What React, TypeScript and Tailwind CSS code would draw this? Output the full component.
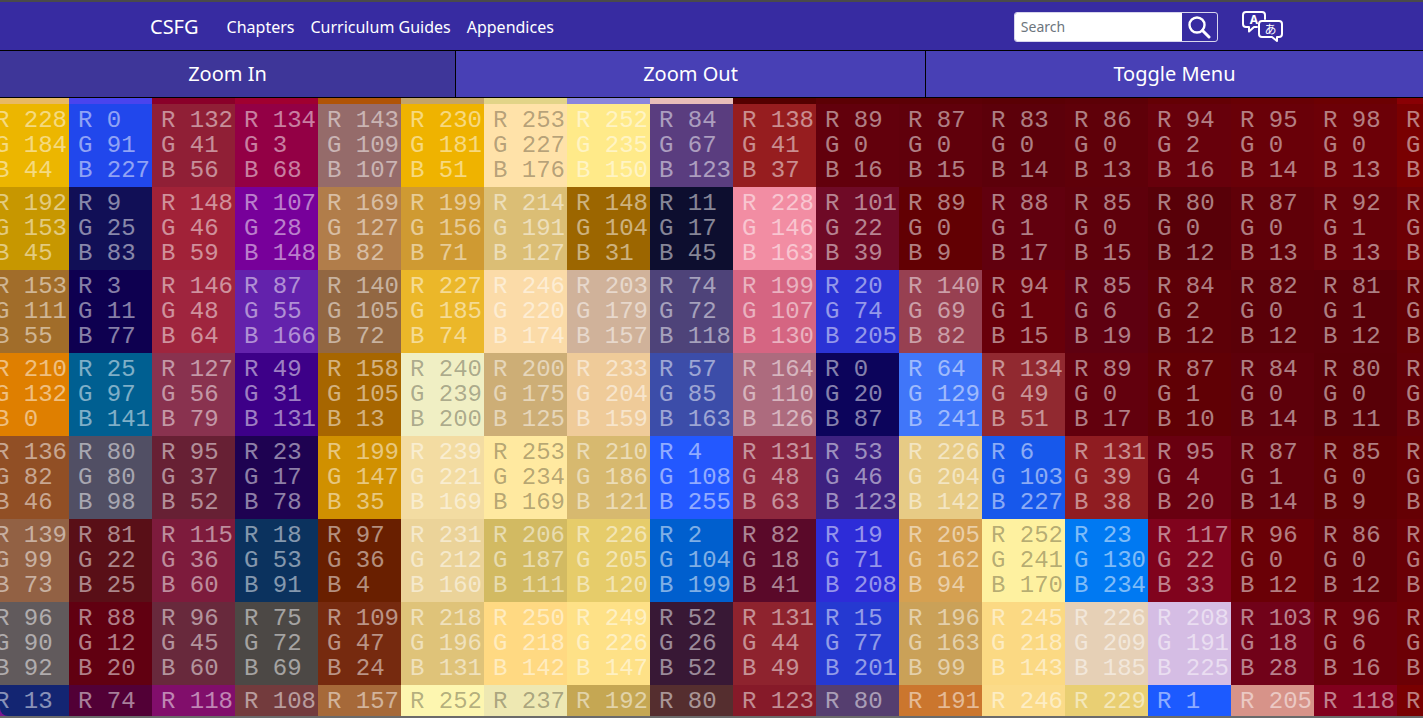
import React from "react";

type Rgb = [number, number, number];

// rows of the pixel grid as labelled on the page
const rows: Rgb[][] = [
  [[228,184,44],[0,91,227],[132,41,56],[134,3,68],[143,109,107],[230,181,51],[253,227,176],[252,235,150],[84,67,123],[138,41,37],[89,0,16],[87,0,15],[83,0,14],[86,0,13],[94,2,16],[95,0,14],[98,0,13],[110,0,10]],
  [[192,153,45],[9,25,83],[148,46,59],[107,28,148],[169,127,82],[199,156,71],[214,191,127],[148,104,31],[11,17,45],[228,146,163],[101,22,39],[89,0,9],[88,1,17],[85,0,15],[80,0,12],[87,0,13],[92,1,13],[100,0,12]],
  [[153,111,55],[3,11,77],[146,48,64],[87,55,166],[140,105,72],[227,185,74],[246,220,174],[203,179,157],[74,72,118],[199,107,130],[20,74,205],[140,69,82],[94,1,15],[85,6,19],[84,2,12],[82,0,12],[81,1,12],[90,0,10]],
  [[210,132,0],[25,97,141],[127,56,79],[49,31,131],[158,105,13],[240,239,200],[200,175,125],[233,204,159],[57,85,163],[164,110,126],[0,20,87],[64,129,241],[134,49,51],[89,0,17],[87,1,10],[84,0,14],[80,0,11],[90,0,12]],
  [[136,82,46],[80,80,98],[95,37,52],[23,17,78],[199,147,35],[239,221,169],[253,234,169],[210,186,121],[4,108,255],[131,48,63],[53,46,123],[226,204,142],[6,103,227],[131,39,38],[95,4,20],[87,1,14],[85,0,9],[92,0,10]],
  [[139,99,73],[81,22,25],[115,36,60],[18,53,91],[97,36,4],[231,212,160],[206,187,111],[226,205,120],[2,104,199],[82,18,41],[19,71,208],[205,162,94],[252,241,170],[23,130,234],[117,22,33],[96,0,12],[86,0,12],[96,0,12]],
  [[96,90,92],[88,12,20],[96,45,60],[75,72,69],[109,47,24],[218,196,131],[250,218,142],[249,226,147],[52,26,52],[131,44,49],[15,77,201],[196,163,99],[245,218,143],[226,209,185],[208,191,225],[103,18,28],[96,6,16],[98,0,12]],
  [[13,45,110],[74,4,52],[118,28,104],[108,62,62],[157,108,66],[252,246,184],[237,232,184],[192,168,96],[80,48,48],[123,36,44],[80,66,108],[191,122,62],[246,220,148],[229,208,128],[1,108,247],[205,150,140],[118,8,32],[110,0,10]],
];

// strip of the row above, only its last 6px show
const strip: string[] = [
  "#e8b964","#4a44ee","#8a0029","#a00030","#b05406","#c4a469","#e2d488","#8a85dc","#e8bdb8",
  "#540000","#5c0004","#5c0005","#5a0004","#5c0006","#640004","#680004","#6c0002","#8a0004",
];

const toLinear = (v: number) => {
  const c = v / 255;
  return c <= 0.04045 ? c / 12.92 : Math.pow((c + 0.055) / 1.055, 2.4);
};

const toByte = (v: number) => {
  const c = Math.min(1, Math.max(0, v));
  return Math.round(255 * (c <= 0.0031308 ? c * 12.92 : 1.055 * Math.pow(c, 1 / 2.4) - 0.055));
};

// the capture shows the labelled values more saturated than plain sRGB,
// and strong blues lean towards violet
const shown = ([r, g, b]: Rgb) => {
  const [lr, lg, lb] = [toLinear(r), toLinear(g), toLinear(b)];
  const blue = Math.max(0, lb - Math.max(lr, lg));
  const nr = 1.2249 * lr - 0.2247 * lg + 0.058 * blue;
  const ng = -0.042 * lr + 1.0419 * lg - 0.07 * blue;
  const nb = -0.0197 * lr - 0.0786 * lg + 1.0979 * lb;
  return `rgb(${toByte(nr)},${toByte(ng)},${toByte(nb)})`;
};

const Cell: React.FC<{ value: Rgb }> = ({ value }) => {
  const isLight = value[0] + value[1] + value[2] > 650;
  return (
    <div
      className={`h-[83px] w-[83px] flex flex-col justify-center pl-[9px] whitespace-pre text-[24px] leading-[25px] font-['Liberation_Mono',monospace] ${
        isLight ? "text-black/30" : "text-white/50"
      }`}
      style={{ backgroundColor: shown(value) }}
    >
      <div>R {value[0]}</div>
      <div>G {value[1]}</div>
      <div>B {value[2]}</div>
    </div>
  );
};

const SearchIcon = () => (
  <svg width="24" height="24" viewBox="0 0 24 24" fill="none" stroke="currentColor">
    <circle cx="10" cy="10" r="7.5" strokeWidth="2.4" />
    <path d="M15.5 15.5L22 22" strokeWidth="3" strokeLinecap="round" />
  </svg>
);

const TranslateIcon = () => (
  <svg width="42" height="32" viewBox="0 0 42 32" fill="none" className="text-white -mt-[2px]">
    <path
      d="M15 17H12L7 21.5V17H4a3 3 0 0 1-3-3V5a3 3 0 0 1 3-3H20a3 3 0 0 1 3 3V9"
      stroke="currentColor"
      strokeWidth="2"
      strokeLinejoin="round"
      strokeLinecap="round"
    />
    <path
      d="M20 11H37a3 3 0 0 1 3 3V24a3 3 0 0 1-3 3H35V31L30 27H20a3 3 0 0 1-3-3V14a3 3 0 0 1 3-3z"
      stroke="currentColor"
      strokeWidth="2"
      strokeLinejoin="round"
    />
    <text x="12" y="14" textAnchor="middle" fill="currentColor" fontSize="12" fontWeight="700" fontFamily="'Noto Sans',sans-serif">
      A
    </text>
    <text x="28.5" y="24" textAnchor="middle" fill="currentColor" fontSize="12" fontFamily="'Noto Sans CJK JP',sans-serif">
      あ
    </text>
  </svg>
);

export default function App() {
  return (
    <div className="h-[718px] w-[1423px] overflow-hidden flex flex-col bg-[#372ba1] font-['Noto_Sans',sans-serif] text-white">
      <div className="h-[2px] bg-[#4a4a4a] shrink-0" />
      <nav className="h-[48px] shrink-0 pt-[2px] flex items-center bg-[#372ba1]">
        <span className="ml-[150px] text-[20px]">CSFG</span>
        <div className="ml-[28px] flex gap-4 text-[16px]">
          <a>Chapters</a>
          <a>Curriculum Guides</a>
          <a>Appendices</a>
        </div>
        <div className="ml-[460px] flex h-[30px] w-[204px] rounded-[3px] overflow-hidden border border-white/80">
          <div className="flex-1 bg-white pl-[6px] text-[14px] leading-[28px] text-[#6c757d]">Search</div>
          <div className="w-[35px] flex items-center justify-center">
            <SearchIcon />
          </div>
        </div>
        <div className="ml-[24px]">
          <TranslateIcon />
        </div>
      </nav>
      <div className="h-[48px] shrink-0 flex border-y border-black text-[20px]">
        <button className="w-[456px] bg-[#3e3699] border-r border-black">Zoom In</button>
        <button className="w-[470px] bg-[#4840b5] border-r border-black">Zoom Out</button>
        <button className="flex-1 bg-[#4840b5]">Toggle Menu</button>
      </div>
      <div className="flex-1 min-h-0 overflow-hidden bg-[#7a1590]">
        <div className="h-full overflow-hidden rounded-bl-[8px]">
          <div className="-ml-[14px] flex w-[1494px]">
            {strip.map((color, i) => (
              <div key={i} className="h-[6px] w-[83px]" style={{ backgroundColor: color }} />
            ))}
          </div>
          <div className="-ml-[14px] grid grid-cols-[repeat(18,83px)] w-[1494px]">
            {rows.map((row, y) => row.map((value, x) => <Cell key={`${y}-${x}`} value={value} />))}
          </div>
        </div>
      </div>
      <div className="h-[2px] shrink-0 bg-[#6b6b6b]" />
    </div>
  );
}
